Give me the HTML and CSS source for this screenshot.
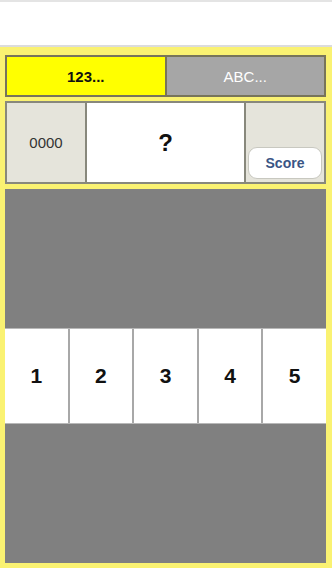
FILE: index.html
```html
<!DOCTYPE html>
<html lang="en">
  <head>
    <meta charset="UTF-8" />
    <meta name="viewport" content="width=device-width, initial-scale=1.0" />
    <title>Number Game</title>
    <link rel="stylesheet" href="styles.css">
  </head>
  <body>
    <div class="topbar"></div>

    <div class="frame">
      <!-- Mode tabs -->
      <div class="tabs">
        <div class="tab tab-active">123...</div>
        <div class="tab tab-off">ABC...</div>
      </div>

      <!-- Counter / question / score -->
      <div class="status">
        <div class="cell counter">0000</div>
        <div class="cell question">?</div>
        <div class="cell score-cell">
          <button class="score-btn">Score</button>
        </div>
      </div>

      <!-- Play area -->
      <div class="board">
        <div class="numbers">
          <div class="num">1</div>
          <div class="num">2</div>
          <div class="num">3</div>
          <div class="num">4</div>
          <div class="num">5</div>
        </div>
      </div>
    </div>
  </body>
</html>
```

FILE: styles.css
```css
/* General */
body {
  margin: 0;
  padding: 0;
  font-family: "Liberation Sans", Arial, sans-serif;
  background: white;
  height: 568px;
  display: flex;
  flex-direction: column;
  overflow: hidden;
}

.topbar {
  height: 43px;
  border-top: 2px solid #e4e4e4;
  border-bottom: 2px solid #dcdcdc;
  background: #ffffff;
}

/* Yellow frame */
.frame {
  flex: 1;
  background: #faf272;
  padding: 8px 6px 5px 5px;
  display: flex;
  flex-direction: column;
  gap: 4px;
}

/* Tabs */
.tabs {
  display: flex;
  height: 38px;
  border: 2px solid #77745a;
}

.tab {
  flex: 1;
  display: flex;
  align-items: center;
  justify-content: center;
  font-size: 15px;
}

.tab-active {
  background: #ffff00;
  color: #111;
  font-weight: bold;
  border-right: 2px solid #77745a;
}

.tab-off {
  background: #a6a6a6;
  color: #ffffff;
}

/* Status row */
.status {
  display: flex;
  height: 79px;
  border: 2px solid #88887c;
  margin-bottom: 1px;
}

.cell {
  display: flex;
  align-items: center;
  justify-content: center;
}

.counter {
  width: 78px;
  background: #e5e4db;
  color: #333;
  font-size: 15px;
  border-right: 2px solid #88887c;
}

.question {
  flex: 1;
  background: white;
  font-size: 24px;
  font-weight: bold;
  color: #111;
  border-right: 2px solid #88887c;
}

.score-cell {
  width: 78px;
  background: #e5e4db;
  align-items: flex-end;
  padding-bottom: 3px;
}

.score-btn {
  width: 74px;
  height: 32px;
  background: white;
  border: 1px solid #c8c8c0;
  border-radius: 9px;
  color: #3a5585;
  font-family: "Liberation Sans", Arial, sans-serif;
  font-size: 14px;
  font-weight: bold;
  padding: 0;
}

/* Board */
.board {
  flex: 1;
  background: #808080;
  display: flex;
  align-items: center;
}

.numbers {
  flex: 1;
  display: flex;
  height: 94px;
  background: white;
  border-top: 1px solid #b8b8b8;
  border-bottom: 1px solid #b8b8b8;
}

.num {
  flex: 1;
  display: flex;
  align-items: center;
  justify-content: center;
  font-size: 21px;
  font-weight: bold;
  color: #111;
  border-right: 2px solid #a8a8a8;
}

.num:last-child {
  border-right: none;
}
```
